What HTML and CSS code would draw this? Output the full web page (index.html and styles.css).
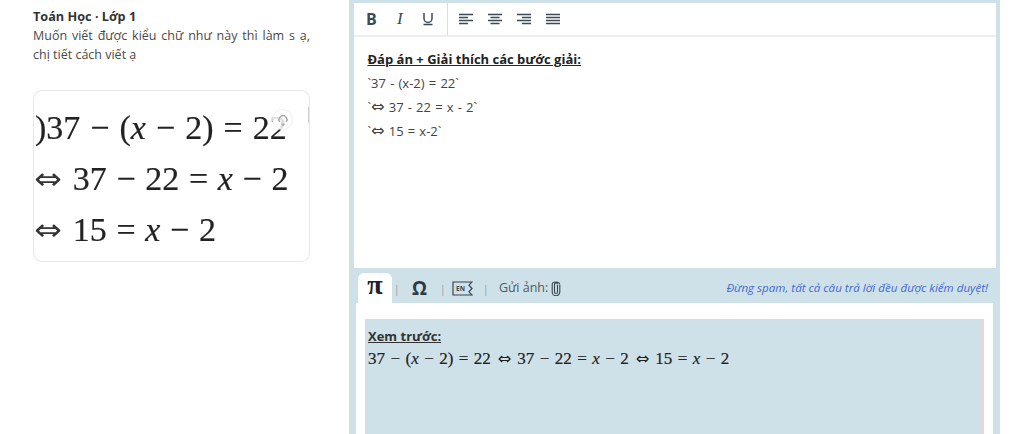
FILE: index.html
```html
<!DOCTYPE html>
<html lang="vi">
<head>
<meta charset="utf-8">
<title>Toán Học</title>
<link rel="stylesheet" href="styles.css">
</head>
<body>
<div class="page">
  <aside class="left">
    <div class="subject">Toán Học · Lớp 1</div>
    <p class="question">Muốn viết được kiểu chữ như này thì làm s ạ, chị tiết cách viết ạ</p>
    <div class="card">
      <div class="math">
        <div class="mline first"><span class="paren">)</span><span>37</span><span class="op">−</span><span>(<i>x</i></span><span class="op">−</span><span>2)</span><span class="op">=</span><span>22</span></div>
        <div class="mline"><span class="arrow">⇔</span><span>37</span><span class="op">−</span><span>22</span><span class="op">=</span><span><i>x</i></span><span class="op">−</span><span>2</span></div>
        <div class="mline"><span class="arrow">⇔</span><span>15</span><span class="op">=</span><span><i>x</i></span><span class="op">−</span><span>2</span></div>
      </div>
      <div class="reload">
        <svg width="12" height="12" viewBox="0 0 14 14"><path d="M3.2 9.2A4.6 4.6 0 1 1 10.8 9.2M5.4 11.6 L7 13 8.6 11.6" fill="none" stroke="#a8a8a8" stroke-width="1.8"/></svg>
      </div>
      <div class="tick"></div>
    </div>
  </aside>
  <main class="panel">
    <section class="editor">
      <div class="toolbar">
        <div class="tgroup fmt">
          <span class="tb bold">B</span>
          <span class="tb ital">I</span>
          <svg class="ic under" width="10" height="14" viewBox="0 0 10 14"><path d="M1 1v5.500a4 4 0 0 0 8 0V1M.5 12.500h9" fill="none" stroke="#3d4a54" stroke-width="1.500"/></svg>
        </div>
        <div class="tgroup aligns">
          <svg class="ic" width="15" height="13" viewBox="0 0 15 13"><path d="M1 1.500h14M1 4.500h9M1 7.500h14M1 10.500h9" stroke="#3d4a54" stroke-width="1.300"/></svg>
          <svg class="ic" width="15" height="13" viewBox="0 0 15 13"><path d="M1 1.500h14M3.500 4.500h9M1 7.500h14M3.500 10.500h9" stroke="#3d4a54" stroke-width="1.300"/></svg>
          <svg class="ic" width="15" height="13" viewBox="0 0 15 13"><path d="M1 1.500h14M6 4.500h9M1 7.500h14M6 10.500h9" stroke="#3d4a54" stroke-width="1.300"/></svg>
          <svg class="ic" width="15" height="13" viewBox="0 0 15 13"><path d="M1 1.500h14M1 4.500h14M1 7.500h14M1 10.500h14" stroke="#3d4a54" stroke-width="1.300"/></svg>
        </div>
      </div>
      <div class="content">
        <p class="heading">Đáp án + Giải thích các bước giải:</p>
        <p class="row">`37 - (x-2) = 22`</p>
        <p class="row">`<span class="darr">⇔</span> 37 - 22 = x - 2`</p>
        <p class="row">`<span class="darr">⇔</span> 15 = x-2`</p>
      </div>
    </section>
    <div class="tabs">
      <span class="tab">π</span>
      <span class="sep">|</span>
      <span class="omega">Ω</span>
      <span class="sep">|</span>
      <svg class="kbd" width="21" height="15" viewBox="0 0 21 15"><path d="M20 1H1v13h19l-3-3.200 3-3.300-3-3.300z" fill="none" stroke="#39454d" stroke-width="1.200"/><text x="4" y="10" class="kbdtext">EN</text></svg>
      <span class="sep">|</span>
      <span class="send">Gửi ảnh:</span>
      <svg class="clip" width="10" height="15" viewBox="0 0 10 15"><path d="M6.500 4v7a1.500 1.500 0 0 1-3 0V3.500a1.500 1.500 0 0 1 3 0M8.800 4v7a3.800 3.800 0 0 1-7.600 0V3.500a3.800 2.500 0 0 1 7.600 0" fill="none" stroke="#39454d" stroke-width="1.100"/></svg>
      <span class="notice">Đừng spam, tất cả câu trả lời đều được kiểm duyệt!</span>
    </div>
    <section class="below">
      <div class="preview">
        <div class="ptitle">Xem trước:</div>
        <div class="pmath"><span>37 − (<i>x</i> − 2) = 22</span><span class="parr">⇔</span><span>37 − 22 = <i>x</i> − 2</span><span class="parr">⇔</span><span>15 = <i>x</i> − 2</span></div>
      </div>
    </section>
  </main>
</div>
</body>
</html>
```
FILE: styles.css
```css
* { box-sizing: border-box; }
html, body { margin: 0; height: 434px; overflow: hidden; background: #fff; }
body { font-family: "Open Sans", sans-serif; color: #3a3a3a; }
.page { display: flex; height: 434px; padding-left: 33px; }
.left { width: 277px; flex: none; padding-top: 8px; }
.subject { font-size: 12.700px; font-weight: 700; line-height: 16px; color: #333; }
.question { margin: 2px 0 0; font-size: 12.500px; line-height: 19px; color: #4a4a4a; text-align: justify; }
.card { position: relative; margin-top: 26px; height: 172px; border: 1px solid #e6e6e6; border-radius: 9px; overflow: hidden; }
.math { font-family: "Liberation Serif", serif; font-size: 34px; color: #222; padding-top: 11px; -webkit-text-stroke: 0.2px #222; filter: blur(0.3px); }
.mline { display: flex; align-items: center; gap: 9.700px; height: 51px; white-space: nowrap; }
.mline.first { gap: 10px; }
.paren { margin-right: -10px; margin-left: 1px; }
.arrow { font-family: "DejaVu Sans", sans-serif; font-size: 30px; -webkit-text-stroke: 0; color: #333; width: 29px; display: inline-block; transform: scaleX(1.100); transform-origin: left center; }
.reload { position: absolute; left: 238px; top: 18px; width: 21px; height: 21px; border-radius: 50%; background: rgba(255,255,255,.85); border: 1px solid #efefef; display: flex; align-items: center; justify-content: center; }
.tick { position: absolute; left: 274px; top: 16px; width: 1px; height: 16px; background: #d0d0d0; }
.panel { margin-left: 39px; width: 651px; flex: none; height: 434px; background: #cfe1e8; padding: 3px 4px 0 5px; display: flex; flex-direction: column; }
.editor { height: 265px; flex: none; background: #fff; }
.toolbar { display: flex; height: 34px; border-bottom: 2px solid #eceeef; }
.tgroup { display: flex; align-items: center; height: 32px; }
.fmt { width: 94px; padding-left: 12px; gap: 16px; border-right: 1px solid #dcdfe0; }
.tb { font-size: 15px; line-height: 16px; width: 11px; color: #3d4a54; }
.bold { font-weight: 700; font-size: 16px; }
.ital { font-family: "Liberation Serif", serif; font-style: italic; font-size: 17px; margin-left: 4px; }
.under { margin-left: -1px; }
.aligns { padding-left: 10px; gap: 14px; }
.content { padding: 14px 0 0 13.500px; }
.heading { margin: 0 0 3px; font-size: 13px; line-height: 17px; font-weight: 700; color: #222; text-decoration: underline; }
.row { margin: 0; height: 24px; font-size: 13px; line-height: 24px; color: #444; word-spacing: 0.800px; }
.darr { font-family: "DejaVu Sans", sans-serif; font-size: 16px; line-height: 1; }
.tabs { display: flex; align-items: flex-end; height: 35px; flex: none; padding-left: 4px; color: #39454d; }
.tab { width: 34px; height: 30px; background: #fff; border-radius: 6px 6px 0 0; text-align: center; font-family: "Liberation Serif", serif; font-weight: 700; font-size: 28px; line-height: 23px; color: #222; }
.sep { width: 2px; margin: 0 0 8px 0; font-size: 10px; line-height: 12px; color: #8a9aa2; }
.tab + .sep { margin-left: 2px; }
.omega { font-family: "Open Sans", sans-serif; font-weight: 700; font-size: 19px; line-height: 24px; color: #2e3a42; margin: 0 13px 3px 16px; }
.kbd { margin: 0 10px 7px 10px; }
.kbdtext { font-family: "Open Sans", sans-serif; font-size: 6.500px; font-weight: 700; fill: #39454d; }
.send { margin: 0 3px 7px 14px; font-size: 12.500px; line-height: 17px; color: #4d5a62; }
.clip { margin-bottom: 7px; }
.notice { margin: 0 8px 7px auto; font-size: 11.600px; line-height: 16px; font-style: italic; color: #3f69d4; }
.below { flex: 1; margin-left: 2px; margin-right: 3px; background: #fff; padding: 16px 9px 0 9px; }
.preview { height: 120px; background: #cfe1e8; border-right: 5px solid #e1dadd; padding: 9px 0 0 3px; }
.ptitle { font-size: 13px; line-height: 16px; font-weight: 700; color: #333; text-decoration: underline; }
.pmath { margin-top: 5px; display: flex; font-family: "Liberation Serif", serif; font-size: 17px; line-height: 20px; color: #222; word-spacing: 1.200px; -webkit-text-stroke: 0.2px #222; }
.parr { font-family: "DejaVu Sans", sans-serif; font-size: 16px; margin: 0 6px 0 7px; -webkit-text-stroke: 0; }
```
